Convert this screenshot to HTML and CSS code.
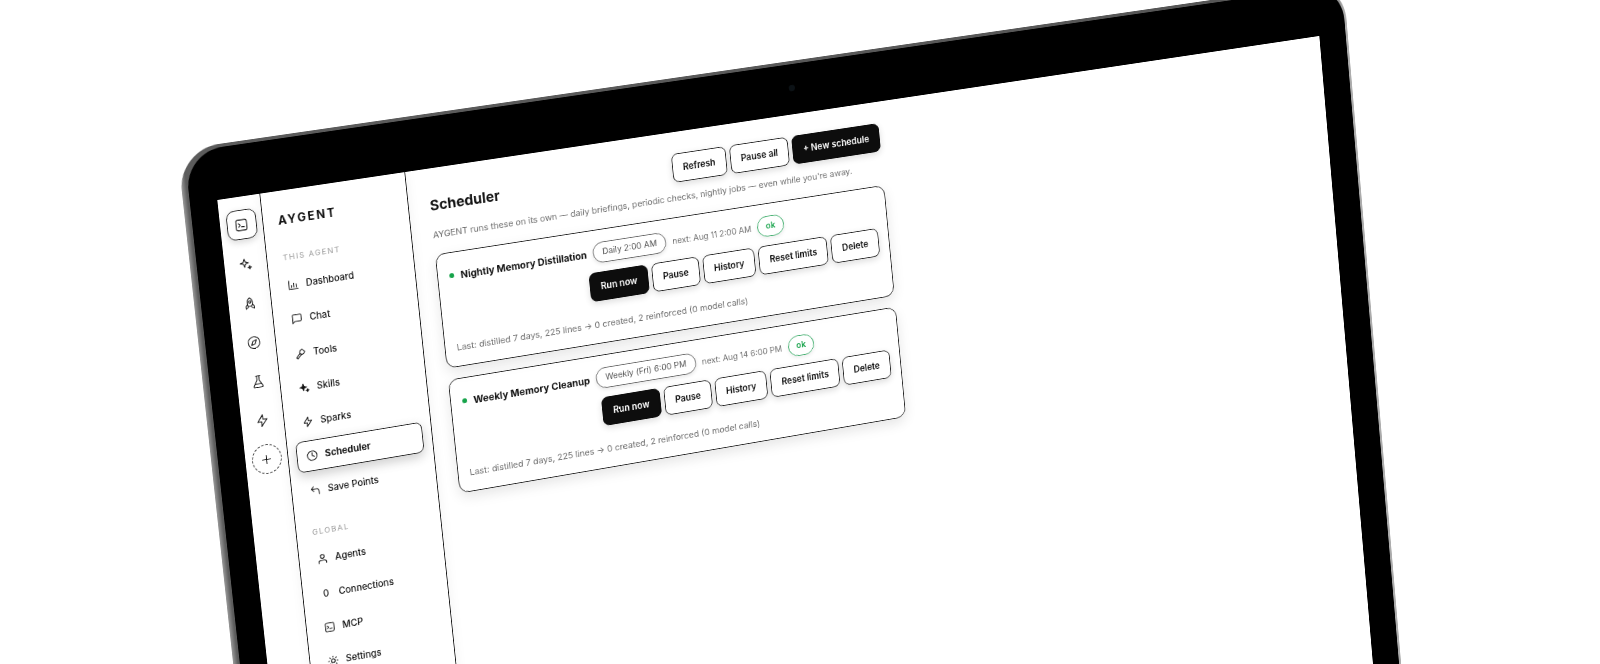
FILE: index.html
```html
<!DOCTYPE html>
<html lang="en">
<head>
    <meta charset="UTF-8">
    <meta name="viewport" content="width=device-width, initial-scale=1.0">
    <title>AYGENT Scheduler</title>
    <link rel="stylesheet" href="styles.css">
</head>
<body>
    <div class="stage">
        <div class="device">
            <div class="bezel">
                <div class="camera"></div>
                <div class="screen">

                    <!-- Agent rail -->
                    <nav class="rail">
                        <div class="rail-btn active">
                            <svg class="ico" viewBox="0 0 24 24"><rect x="3" y="3" width="18" height="18" rx="3"/><path d="m7 15 3-3-3-3M12 15h5"/></svg>
                        </div>
                        <div class="rail-btn">
                            <svg class="ico" viewBox="0 0 24 24"><path d="M10 3l1.7 5.3L17 10l-5.3 1.7L10 17l-1.7-5.3L3 10l5.3-1.7zM18.5 15l.8 2.2 2.2.8-2.2.8-.8 2.2-.8-2.2-2.2-.8 2.2-.8z"/></svg>
                        </div>
                        <div class="rail-btn">
                            <svg class="ico" viewBox="0 0 24 24"><path d="M12 2.500c3 2 4.500 5 4.500 8.500 0 2.500-.8 4.500-1.500 6H9c-.7-1.500-1.500-3.500-1.500-6 0-3.500 1.500-6.500 4.500-8.500z"/><circle cx="12" cy="9.500" r="2"/><path d="M7.800 13.500 5 17v4l4-2.500M16.200 13.500 19 17v4l-4-2.500"/></svg>
                        </div>
                        <div class="rail-btn">
                            <svg class="ico" viewBox="0 0 24 24"><circle cx="12" cy="12" r="10"/><path d="m16.200 7.800-2.100 6.300-6.300 2.100 2.100-6.300z"/></svg>
                        </div>
                        <div class="rail-btn">
                            <svg class="ico" viewBox="0 0 24 24"><path d="M10 2v7.500L4.500 19a2 2 0 0 0 1.700 3h11.600a2 2 0 0 0 1.700-3L14 9.500V2M8.500 2h7M7 16h10"/></svg>
                        </div>
                        <div class="rail-btn">
                            <svg class="ico" viewBox="0 0 24 24"><path d="M13 2 4 14h7l-1 8 10-12h-7z"/></svg>
                        </div>
                        <div class="rail-btn add">
                            <svg class="ico" viewBox="0 0 24 24"><path d="M12 5v14M5 12h14"/></svg>
                        </div>
                    </nav>

                    <!-- Sidebar -->
                    <aside class="sidebar">
                        <div class="brand">AYGENT</div>
                        <div class="nav-label first">THIS AGENT</div>
                        <a class="nav-item"><svg class="ico" viewBox="0 0 24 24"><path d="M3 3v18h18M8 17v-4M13 17V9M18 17v-6"/></svg>Dashboard</a>
                        <a class="nav-item"><svg class="ico" viewBox="0 0 24 24"><path d="M21 15a2 2 0 0 1-2 2H7l-4 4V5a2 2 0 0 1 2-2h14a2 2 0 0 1 2 2z"/></svg>Chat</a>
                        <a class="nav-item"><svg class="ico" viewBox="0 0 24 24"><path d="M5.500 22 3 19.500l7.500-8 3 3zM10 10l4.500 4.500 4-2 2.500-4-5.500-5.500-4 2.500z"/></svg>Tools</a>
                        <a class="nav-item"><svg class="ico solid" viewBox="0 0 24 24"><path d="M10 4l1.700 5.300L17 11l-5.300 1.700L10 18l-1.700-5.300L3 11l5.300-1.700zM18.500 15l.8 2.200 2.200.8-2.200.8-.8 2.200-.8-2.200-2.200-.8 2.200-.8z"/></svg>Skills</a>
                        <a class="nav-item"><svg class="ico" viewBox="0 0 24 24"><path d="M13 2 4 14h7l-1 8 10-12h-7z"/></svg>Sparks</a>
                        <a class="nav-item active"><svg class="ico" viewBox="0 0 24 24"><circle cx="12" cy="12" r="10"/><path d="M12 6v6l4 2"/></svg>Scheduler</a>
                        <a class="nav-item"><svg class="ico" viewBox="0 0 24 24"><path d="M9 14 4 9l5-5M4 9h10.500a5.500 5.500 0 0 1 5.500 5.500V20"/></svg>Save Points</a>
                        <div class="nav-label">GLOBAL</div>
                        <a class="nav-item"><svg class="ico" viewBox="0 0 24 24"><path d="M20 21v-2a4 4 0 0 0-4-4H8a4 4 0 0 0-4 4v2"/><circle cx="12" cy="7" r="4"/></svg>Agents</a>
                        <a class="nav-item"><span class="ico-text">0</span>Connections</a>
                        <a class="nav-item"><svg class="ico" viewBox="0 0 24 24"><rect x="3" y="3" width="18" height="18" rx="3"/><path d="m7 15 3-3-3-3M12 15h5"/></svg>MCP</a>
                        <a class="nav-item"><svg class="ico" viewBox="0 0 24 24"><circle cx="12" cy="12" r="4"/><path d="M12 2v2M12 20v2M4.900 4.900l1.400 1.400M17.700 17.700l1.400 1.400M2 12h2M20 12h2M6.300 17.700l-1.400 1.400M19.100 4.900l-1.400 1.400"/></svg>Settings</a>
                    </aside>

                    <!-- Main -->
                    <main class="main">
                        <div class="head">
                            <h1>Scheduler</h1>
                            <div class="head-btns">
                                <button class="btn">Refresh</button>
                                <button class="btn">Pause all</button>
                                <button class="btn dark">+ New schedule</button>
                            </div>
                        </div>
                        <p class="sub">AYGENT runs these on its own — daily briefings, periodic checks, nightly jobs — even while you're away.</p>

                        <div class="card">
                            <div class="card-row">
                                <span class="dot"></span>
                                <span class="name">Nightly Memory Distillation</span>
                                <span class="pill">Daily 2:00 AM</span>
                                <span class="next">next: Aug 11 2:00 AM</span>
                                <span class="ok">ok</span>
                                <div class="actions">
                                    <button class="btn dark">Run now</button>
                                    <button class="btn">Pause</button>
                                    <button class="btn">History</button>
                                    <button class="btn">Reset limits</button>
                                    <button class="btn">Delete</button>
                                </div>
                            </div>
                            <div class="last">Last: distilled 7 days, 225 lines → 0 created, 2 reinforced (0 model calls)</div>
                        </div>

                        <div class="card">
                            <div class="card-row">
                                <span class="dot"></span>
                                <span class="name">Weekly Memory Cleanup</span>
                                <span class="pill">Weekly (Fri) 6:00 PM</span>
                                <span class="next">next: Aug 14 6:00 PM</span>
                                <span class="ok">ok</span>
                                <div class="actions">
                                    <button class="btn dark">Run now</button>
                                    <button class="btn">Pause</button>
                                    <button class="btn">History</button>
                                    <button class="btn">Reset limits</button>
                                    <button class="btn">Delete</button>
                                </div>
                            </div>
                            <div class="last">Last: distilled 7 days, 225 lines → 0 created, 2 reinforced (0 model calls)</div>
                        </div>
                    </main>
                </div>
            </div>
        </div>
    </div>
</body>
</html>
```

FILE: styles.css
```css
html, body {
    margin: 0;
    height: 664px;
    overflow: hidden;
    background: #fff;
}
body {
    font-family: 'Inter', 'Liberation Sans', sans-serif;
    color: #111;
}

/* the whole laptop is one plane, tilted into place */
.stage {
    display: flow-root;
    width: 1440px;
    height: 900px;
    transform-origin: 0 0;
    transform: matrix3d(.8395, -.1119, 0, .00005625, .0921, .8231, 0, .00001658, 0, 0, 1, 0, 217.3, 200, 0, 1);
}
.device {
    width: 1521px;
    margin: -67px 0 0 -41px;
    padding: 4px 3px 0 8px;
    box-sizing: border-box;
    border-radius: 50px 50px 0 0;
    background: linear-gradient(90deg, #9a9a9a, #5c5c5c 6px, #555 98%, #b0b0b0);
    filter: blur(.6px);
}
.bezel {
    position: relative;
    padding: 63px 37px 40px 33px;
    background: #000;
    border-radius: 46px 46px 0 0;
}
.camera {
    position: absolute;
    top: 26px;
    left: 50%;
    width: 8px;
    height: 8px;
    border-radius: 50%;
    background: #0c1216;
}
.screen {
    display: flex;
    width: 1440px;
    height: 900px;
    overflow: hidden;
    background: #fff;
}

.ico {
    flex: none;
    width: 14px;
    height: 14px;
    fill: none;
    stroke: #111;
    stroke-width: 1.8;
    stroke-linecap: round;
    stroke-linejoin: round;
}
.ico.solid {
    fill: #111;
}
.ico-text {
    flex: none;
    width: 14px;
    text-align: center;
    font-size: 11.300px;
}

.rail {
    flex: none;
    width: 52px;
    box-sizing: border-box;
    padding-top: 16px;
    display: flex;
    flex-direction: column;
    align-items: center;
    gap: 12px;
    border-right: 1.5px solid #111;
}
.rail-btn {
    width: 36px;
    height: 36px;
    display: flex;
    align-items: center;
    justify-content: center;
    box-sizing: border-box;
}
.rail-btn .ico {
    width: 17px;
    height: 17px;
    stroke-width: 1.5;
}
.rail-btn.active {
    border: 1.8px solid #222;
    border-radius: 10px;
    box-shadow: 0 3px 8px rgba(0, 0, 0, .16);
}
.rail-btn.add {
    border: 1.8px dashed #222;
    border-radius: 50%;
}

.sidebar {
    flex: none;
    width: 178px;
    box-sizing: border-box;
    padding: 27px 11px 0 10px;
    border-right: 1.5px solid #111;
    box-shadow: 0 0 14px rgba(0, 0, 0, .06);
}
.brand {
    margin-left: 8px;
    font-size: 14px;
    line-height: 18px;
    font-weight: 700;
    letter-spacing: 2.2px;
}
.nav-label {
    margin: 25.500px 0 8px 9px;
    font-size: 9.300px;
    line-height: 14px;
    letter-spacing: 1.5px;
    color: #999;
}
.nav-label.first {
    margin-top: 30px;
}
.nav-item {
    display: flex;
    align-items: center;
    gap: 8.500px;
    height: 38px;
    margin-bottom: 4.300px;
    padding-left: 11px;
    box-sizing: border-box;
    font-size: 11.300px;
    font-weight: 500;
    color: #111;
}
.nav-item.active {
    border: 1.8px solid #222;
    border-radius: 8px;
    font-weight: 650;
    box-shadow: 0 5px 14px rgba(0, 0, 0, .2);
}

.main {
    flex: none;
    width: 578px;
    margin-left: 26px;
    padding-top: 27px;
}
.head {
    display: flex;
    align-items: center;
    justify-content: space-between;
    height: 36px;
}
h1 {
    margin: 0;
    font-size: 17.500px;
    font-weight: 700;
}
.head-btns, .actions {
    display: flex;
    gap: 5px;
}
.btn {
    height: 36px;
    padding: 0 13px;
    box-sizing: border-box;
    border: 1.8px solid #222;
    border-radius: 8px;
    background: #fff;
    color: #111;
    font-family: inherit;
    font-size: 11.200px;
    font-weight: 600;
    box-shadow: 0 3px 8px rgba(0, 0, 0, .14);
}
.btn.dark {
    background: #0d0d0d;
    border-color: #0d0d0d;
    color: #fff;
}
.sub {
    margin: 10px 0 15px;
    font-size: 10.850px;
    line-height: 18px;
    color: #6e6e6e;
}

.card {
    height: 142px;
    margin-bottom: 14px;
    padding: 15px 13px 14px 14px;
    box-sizing: border-box;
    border: 1.8px solid #222;
    border-radius: 12px;
    box-shadow: 0 6px 16px rgba(0, 0, 0, .1);
}
.card-row {
    display: flex;
    flex-wrap: wrap;
    align-items: center;
    gap: 11px 8px;
}
.dot {
    width: 6px;
    height: 6px;
    border-radius: 50%;
    background: #16a34a;
}
.name {
    font-size: 12px;
    font-weight: 700;
}
.pill {
    padding: 0 11px;
    line-height: 24px;
    border: 1.8px solid #666;
    border-radius: 14px;
    font-size: 10.500px;
    color: #555;
    box-shadow: 0 2px 5px rgba(0, 0, 0, .1);
}
.next {
    font-size: 10.300px;
    color: #6e6e6e;
}
.ok {
    padding: 0 10px;
    line-height: 24px;
    border: 1.8px solid #3fae6c;
    border-radius: 13px;
    font-size: 10.500px;
    font-weight: 600;
    color: #16a34a;
    box-shadow: 0 2px 5px rgba(0, 0, 0, .08);
}
.actions {
    margin-left: auto;
}
.last {
    margin-top: 19px;
    font-size: 10.950px;
    line-height: 20px;
    color: #6e6e6e;
}
```
